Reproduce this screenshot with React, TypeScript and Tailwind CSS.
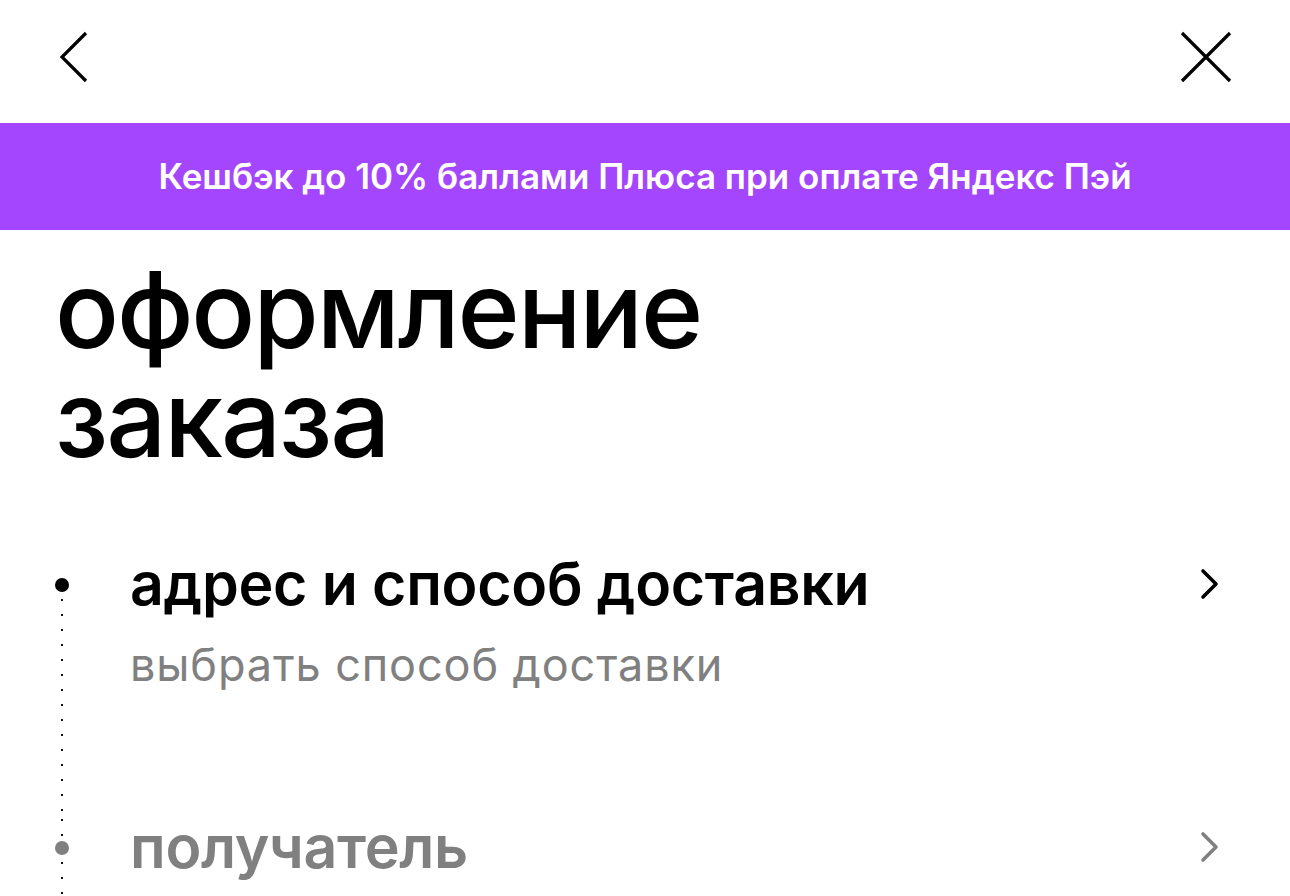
import { ReactNode } from "react";

function BackIcon() {
  return (
    <svg width="30" height="52" viewBox="0 0 30 52" fill="none" className="mt-[31px]">
      <path d="M27 2 L3 26 L27 50" stroke="#000" strokeWidth="3.2" />
    </svg>
  );
}

function CloseIcon() {
  return (
    <svg width="52" height="52" viewBox="0 0 52 52" fill="none" className="mt-[31px]">
      <path d="M2 2 L50 50 M50 2 L2 50" stroke="#000" strokeWidth="3.2" />
    </svg>
  );
}

function Chevron({ muted }: { muted?: boolean }) {
  return (
    <svg width="20" height="32" viewBox="0 0 20 32" fill="none" className="shrink-0">
      <path
        d="M3 3 L16 16 L3 29"
        stroke={muted ? "#808080" : "#000"}
        strokeWidth="3.6"
        strokeLinecap="round"
        strokeLinejoin="round"
      />
    </svg>
  );
}

const rail = "w-[2px] bg-[linear-gradient(#111_2px,transparent_2px)] bg-[length:2px_15px] bg-repeat-y";

// one row of the checkout timeline: dot + dotted rail on the left, content on the right
function Step({
  title,
  muted,
  first,
  children,
  contentClass,
}: {
  title: string;
  muted?: boolean;
  first?: boolean;
  children?: ReactNode;
  contentClass?: string;
}) {
  return (
    <li className="flex">
      <div className="flex w-[14px] shrink-0 flex-col items-center">
        <div className={`h-[26px] ${first ? "" : `${rail} [background-position:0_4px]`}`} />
        <div className={`h-[14px] w-[14px] rounded-full ${muted ? "bg-[#808080]" : "bg-black"}`} />
        <div className={`${rail} flex-1 [background-position:0_7px]`} />
      </div>
      <div className={`ml-[61px] flex-1 ${contentClass ?? ""}`}>
        <div className="flex h-[64px] items-center justify-between">
          <h2
            className={`text-[59px] font-semibold leading-[64px] tracking-[-0.005em] ${muted ? "text-[#808080]" : "text-black"}`}
          >
            {title}
          </h2>
          <Chevron muted={muted} />
        </div>
        {children}
      </div>
    </li>
  );
}

export default function App() {
  return (
    <div className="min-h-screen overflow-hidden bg-white font-['Inter','Noto_Sans',sans-serif] text-black">
      <header className="flex h-[123px] items-start justify-between pl-[59px] pr-[58px]">
        <BackIcon />
        <CloseIcon />
      </header>

      <div className="flex h-[107px] items-center justify-center bg-[#a346fd] text-[35px] font-semibold text-white">
        Кешбэк до 10% баллами Плюса при оплате Яндекс Пэй
      </div>

      <h1 className="mt-[25px] px-[55px] text-[106px] font-medium leading-[109px] tracking-[-0.02em]">
        оформление
        <br />
        заказа
      </h1>

      <ol className="mt-[79px] pl-[55px] pr-[70px]">
        <Step title="адрес и способ доставки" first contentClass="pb-[124px]">
          <p className="mt-[23px] text-[45px] leading-[52px] tracking-[0.02em] text-[#808080]">
            выбрать способ доставки
          </p>
        </Step>
        <Step title="получатель" muted contentClass="h-[200px]" />
      </ol>
    </div>
  );
}
